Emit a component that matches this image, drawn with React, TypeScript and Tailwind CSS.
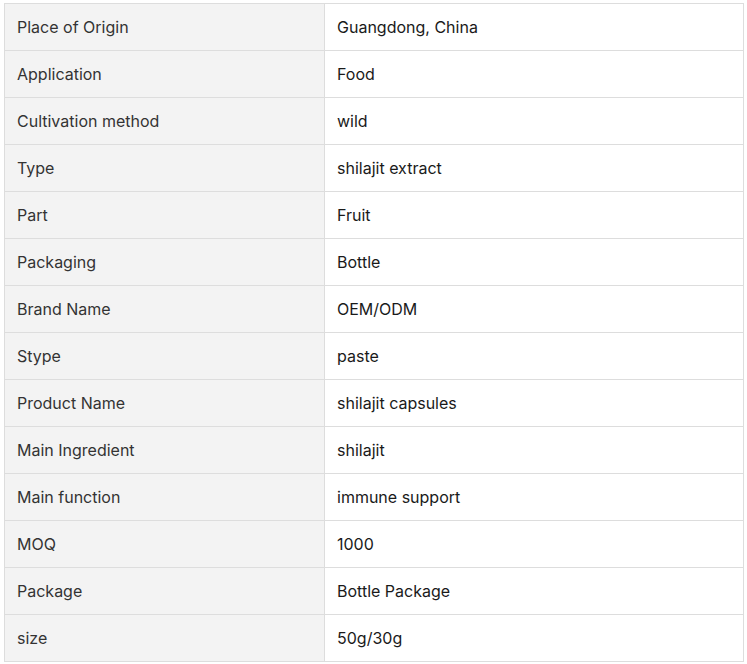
const rows: [string, string][] = [
  ['Place of Origin', 'Guangdong, China'],
  ['Application', 'Food'],
  ['Cultivation method', 'wild'],
  ['Type', 'shilajit extract'],
  ['Part', 'Fruit'],
  ['Packaging', 'Bottle'],
  ['Brand Name', 'OEM/ODM'],
  ['Stype', 'paste'],
  ['Product Name', 'shilajit capsules'],
  ['Main Ingredient', 'shilajit'],
  ['Main function', 'immune support'],
  ['MOQ', '1000'],
  ['Package', 'Bottle Package'],
  ['size', '50g/30g'],
];

export default function App() {
  return (
    <div className="min-h-screen bg-white pt-[3px] pl-[4px] font-['Inter',sans-serif] text-[16px]">
      <table className="w-[740px] border-collapse">
        <tbody>
          {rows.map(([label, value]) => (
            <tr key={label} className="h-[47px]">
              <td className="w-[320px] border border-[#dddddd] bg-[#f3f3f3] px-3 text-[#333333]">{label}</td>
              <td className="border border-[#dddddd] px-3 text-[#1a1a1a]">{value}</td>
            </tr>
          ))}
        </tbody>
      </table>
    </div>
  );
}
